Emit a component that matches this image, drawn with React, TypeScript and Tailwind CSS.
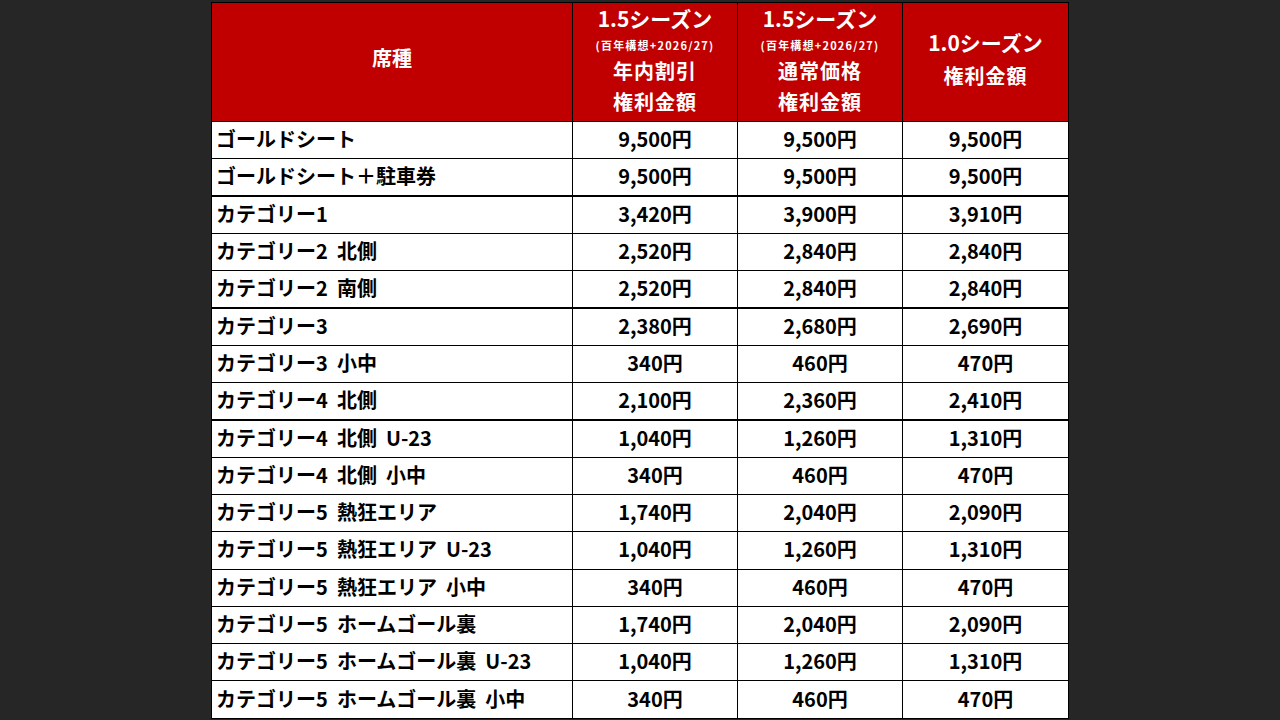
const rows: [string, string, string, string, boolean?][] = [
  ["ゴールドシート", "9,500円", "9,500円", "9,500円"],
  ["ゴールドシート＋駐車券", "9,500円", "9,500円", "9,500円", true],
  ["カテゴリー1", "3,420円", "3,900円", "3,910円"],
  ["カテゴリー2 北側", "2,520円", "2,840円", "2,840円"],
  ["カテゴリー2 南側", "2,520円", "2,840円", "2,840円", true],
  ["カテゴリー3", "2,380円", "2,680円", "2,690円"],
  ["カテゴリー3 小中", "340円", "460円", "470円"],
  ["カテゴリー4 北側", "2,100円", "2,360円", "2,410円", true],
  ["カテゴリー4 北側 U-23", "1,040円", "1,260円", "1,310円"],
  ["カテゴリー4 北側 小中", "340円", "460円", "470円"],
  ["カテゴリー5 熱狂エリア", "1,740円", "2,040円", "2,090円"],
  ["カテゴリー5 熱狂エリア U-23", "1,040円", "1,260円", "1,310円"],
  ["カテゴリー5 熱狂エリア 小中", "340円", "460円", "470円"],
  ["カテゴリー5 ホームゴール裏", "1,740円", "2,040円", "2,090円"],
  ["カテゴリー5 ホームゴール裏 U-23", "1,040円", "1,260円", "1,310円"],
  ["カテゴリー5 ホームゴール裏 小中", "340円", "460円", "470円"],
];

export default function App() {
  return (
    <div
      className="flex h-[720px] w-[1280px] justify-center overflow-hidden bg-[#262626] pt-[2px]"
      style={{ fontFamily: '"Noto Sans CJK JP", "Noto Sans", sans-serif' }}
    >
      <table className="h-[716px] w-[857px] table-fixed border-collapse border border-black bg-white text-[20px] font-bold text-black">
        <colgroup>
          <col className="w-[361px]" />
          <col className="w-[165px]" />
          <col className="w-[165px]" />
          <col className="w-[166px]" />
        </colgroup>
        <thead>
          <tr className="h-[119px] bg-[#c00000] text-[20px] text-white">
            <th className="border border-black pb-[8px] text-center">席種</th>
            {["年内割引", "通常価格"].map((label) => (
              <th key={label} className="border border-black pt-[1px] text-center align-top">
                <div className="text-[21px] leading-[28px]">1.5シーズン</div>
                <div className="text-[11px] leading-[26px] tracking-[1.2px]">(百年構想+2026/27)</div>
                <div className="leading-[26px] tracking-[1px]">{label}</div>
                <div className="leading-[36px] tracking-[1px]">権利金額</div>
              </th>
            ))}
            <th className="border border-black pb-[6px] text-center">
              <div className="text-[21px] leading-[33px]">1.0シーズン</div>
              <div className="leading-[33px] tracking-[1px]">権利金額</div>
            </th>
          </tr>
        </thead>
        <tbody>
          {rows.map(([name, a, b, c, thick]) => (
            <tr
              key={name}
              className={thick ? "h-[37.3px] border-b-2 border-black" : "h-[37.3px]"}
            >
              <td className="whitespace-pre border border-black px-1 pb-[2px] text-left">{name.replace(/ /g, "  ")}</td>
              <td className="border border-black pb-[2px] text-center">{a}</td>
              <td className="border border-black pb-[2px] text-center">{b}</td>
              <td className="border border-black pb-[2px] text-center">{c}</td>
            </tr>
          ))}
        </tbody>
      </table>
    </div>
  );
}
